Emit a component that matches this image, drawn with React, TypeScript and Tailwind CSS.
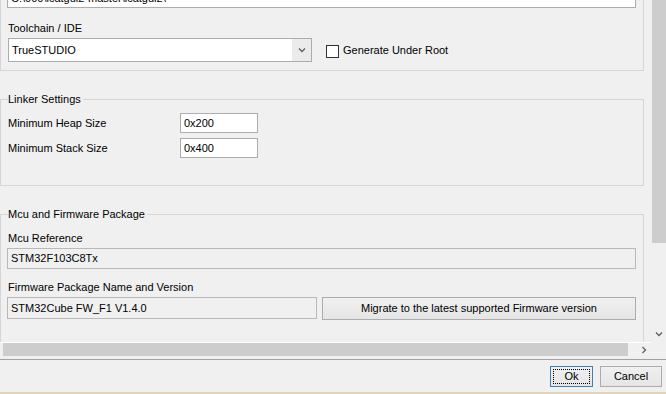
import React from "react";

type ChevronProps = {
  dir: "down" | "right";
};

const Chevron: React.FC<ChevronProps> = ({ dir }) => (
  <svg width="8" height="8" viewBox="0 0 8 8">
    {dir === "down" ? (
      <path d="M1 2.5 L4 5.5 L7 2.5" fill="none" stroke="#606060" strokeWidth="1.3" />
    ) : (
      <path d="M2.5 1 L5.5 4 L2.5 7" fill="none" stroke="#606060" strokeWidth="1.3" />
    )}
  </svg>
);

type GroupProps = {
  title: string;
  className?: string;
  children: React.ReactNode;
};

const GroupBox: React.FC<GroupProps> = ({ title, className = "", children }) => (
  <fieldset className={`w-[644px] shrink-0 border border-[#d5d5d5] px-[7px] ${className}`}>
    <legend className="pr-[2px] leading-[13px]">{title}</legend>
    {children}
  </fieldset>
);

type TextBoxProps = {
  value: string;
  className?: string;
};

const TextBox: React.FC<TextBoxProps> = ({ value, className = "" }) => (
  <div className={`flex items-center border border-[#abadb3] pl-[3px] ${className}`}>{value}</div>
);

const App: React.FC = () => {
  return (
    <div className="flex h-[394px] w-[666px] flex-col overflow-hidden bg-[#f0f0f0] text-[11px] leading-[13px] text-black [font-family:'Liberation_Sans',Arial,sans-serif]">
      <div className="flex h-[359px] shrink-0">
        <div className="flex w-[651px] flex-col">
          <div className="flex h-[342px] shrink-0 flex-col overflow-hidden">
            {/* project settings (top cut off) */}
            <div className="flex h-[71px] w-[644px] shrink-0 flex-col border-x border-b border-[#d5d5d5] pl-[6px]">
              <div className="h-[8px] w-[629px] overflow-hidden border-x border-b border-[#abadb3] bg-white pl-[3px]">
                <div className="-mt-[10px] leading-[16px]">C:\000\lcatgui2-master\lcatgui2\</div>
              </div>
              <div className="ml-[1px] mt-[14px]">Toolchain / IDE</div>
              <div className="ml-[1px] mt-[3px] flex items-center">
                <div className="flex h-[24px] w-[304px] border border-[#acacac] bg-white">
                  <div className="flex flex-1 items-center pl-[3px]">TrueSTUDIO</div>
                  <div className="flex w-[19px] items-center justify-center bg-[#ebebeb]">
                    <Chevron dir="down" />
                  </div>
                </div>
                <div className="ml-[14px] mt-[2px] h-[13px] w-[13px] border border-[#333333] bg-white" />
                <span className="ml-[4px]">Generate Under Root</span>
              </div>
            </div>

            <GroupBox title="Linker Settings" className="mt-[22px] pb-[27px]">
              <div className="mt-[7px] flex h-[20px] items-center">
                <span className="w-[172px]">Minimum Heap Size</span>
                <TextBox value="0x200" className="h-[20px] w-[78px] bg-white" />
              </div>
              <div className="mt-[5px] flex h-[20px] items-center">
                <span className="w-[172px]">Minimum Stack Size</span>
                <TextBox value="0x400" className="h-[20px] w-[78px] bg-white" />
              </div>
            </GroupBox>

            <GroupBox title="Mcu and Firmware Package" className="mt-[22px] pb-[40px]">
              <div className="mt-[11px]">Mcu Reference</div>
              <TextBox value="STM32F103C8Tx" className="-ml-[1px] mt-[3px] h-[21px] w-[629px] border-[#b9b9b9] bg-[#f0f0f0]" />
              <div className="mt-[12px]">Firmware Package Name and Version</div>
              <div className="-ml-[1px] mt-[3px] flex gap-[5px]">
                <TextBox value="STM32Cube FW_F1 V1.4.0" className="h-[22px] w-[310px] border-[#b9b9b9] bg-[#f0f0f0]" />
                <button className="h-[23px] w-[314px] border border-[#acacac] bg-gradient-to-b from-[#f0f0f0] to-[#e5e5e5]">
                  Migrate to the latest supported Firmware version
                </button>
              </div>
            </GroupBox>
          </div>

          {/* horizontal scrollbar */}
          <div className="flex h-[17px] shrink-0 border-t border-white">
            <div className="ml-[3px] h-[13px] w-[625px] bg-[#cdcdcd]" />
            <div className="ml-auto flex h-[13px] w-[15px] items-center justify-center">
              <Chevron dir="right" />
            </div>
          </div>
        </div>

        {/* vertical scrollbar */}
        <div className="flex w-[15px] flex-col">
          <div className="ml-[1px] h-[243px] shrink-0 bg-[#cdcdcd]" />
          <div className="flex-1" />
          <div className="flex h-[17px] shrink-0 items-center justify-center">
            <Chevron dir="down" />
          </div>
          <div className="h-[17px] shrink-0" />
        </div>
      </div>

      <div className="h-px shrink-0 bg-[#a0a0a0]" />

      <div className="flex h-[32px] shrink-0 justify-end gap-[7px] pr-[4px] pt-[6px]">
        <button className="flex h-[21px] w-[43px] border border-[#3c7fb1] bg-gradient-to-b from-[#f0f0f0] to-[#e5e5e5] p-[2px]">
          <span className="flex flex-1 items-center justify-center border border-dotted border-black">Ok</span>
        </button>
        <button className="h-[21px] w-[62px] border border-[#acacac] bg-gradient-to-b from-[#f0f0f0] to-[#e5e5e5]">
          Cancel
        </button>
      </div>

      <div className="h-[2px] shrink-0 bg-[#e6d3b3]" />
    </div>
  );
};

export default App;
